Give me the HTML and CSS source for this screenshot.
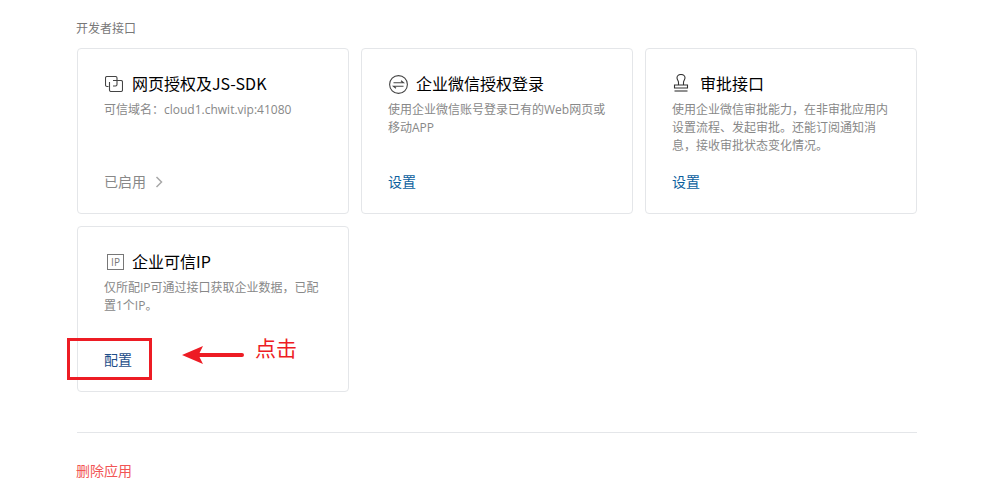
FILE: index.html
```html
<!DOCTYPE html>
<html lang="zh-CN">
<head>
    <meta charset="UTF-8">
    <meta name="viewport" content="width=device-width, initial-scale=1.0">
    <title>开发者接口</title>
    <link rel="stylesheet" href="styles.css">
</head>
<body>
    <div class="container">
        <h3 class="section-title">开发者接口</h3>

        <div class="card-grid">
            <div class="card">
                <div class="card-head">
                    <svg class="card-icon icon-link" width="18" height="16" viewBox="0 0 18 16" fill="none" stroke="#444" stroke-width="1.1">
                        <path d="M3.500 10.500H2A1.500 1.500 0 0 1 .5 9V2A1.500 1.500 0 0 1 2 .5H10.500A1.500 1.500 0 0 1 12 2V8.500A1.500 1.500 0 0 1 10.500 10H8"/>
                        <path d="M8 4.500H16A1.500 1.500 0 0 1 17.500 6V14A1.500 1.500 0 0 1 16 15.500H6A1.500 1.500 0 0 1 4.500 14V6"/>
                    </svg>
                    <span class="card-title">网页授权及JS-SDK</span>
                </div>
                <p class="card-desc">可信域名：cloud1.chwit.vip:41080</p>
                <a class="card-status">已启用
                    <svg class="chevron" width="8" height="12" viewBox="0 0 8 12" fill="none" stroke="#a8a8a8" stroke-width="1.5"><path d="M1.500 1L6.500 6L1.500 11"/></svg>
                </a>
            </div>

            <div class="card">
                <div class="card-head">
                    <svg class="card-icon icon-wechat" width="19" height="19" viewBox="0 0 19 19" fill="none" stroke="#444" stroke-width="1.1">
                        <circle cx="9.500" cy="9.500" r="8.900"/>
                        <path d="M4.500 7.800H14.500L12 5.800"/>
                        <path d="M14.500 11.200H4.500L7 13.200"/>
                    </svg>
                    <span class="card-title">企业微信授权登录</span>
                </div>
                <p class="card-desc">使用企业微信账号登录已有的Web网页或移动APP</p>
                <a class="card-link">设置</a>
            </div>

            <div class="card">
                <div class="card-head">
                    <svg class="card-icon icon-stamp" width="18" height="18" viewBox="0 0 18 18" fill="none" stroke="#333" stroke-width="1.1">
                        <path d="M6.500 11V8.500C6.500 6.500 5 6 5 3.800A4 3.300 0 0 1 13 3.800C13 6 11.500 6.500 11.500 8.500V11"/>
                        <path d="M2.500 11H15.500V14H2.500Z"/>
                        <path d="M2.500 17H15.500"/>
                    </svg>
                    <span class="card-title">审批接口</span>
                </div>
                <p class="card-desc">使用企业微信审批能力，在非审批应用内设置流程、发起审批。还能订阅通知消息，接收审批状态变化情况。</p>
                <a class="card-link">设置</a>
            </div>

            <div class="card">
                <div class="card-head">
                    <span class="ip-icon">IP</span>
                    <span class="card-title">企业可信IP</span>
                </div>
                <p class="card-desc">仅所配IP可通过接口获取企业数据，已配置1个IP。</p>
                <a class="card-link config">配置</a>
            </div>
        </div>

        <hr class="divider">
        <a class="delete-link">删除应用</a>

        <!-- 标注 -->
        <div class="mark-box"></div>
        <svg class="mark-arrow" width="64" height="20" viewBox="0 0 64 20">
            <path d="M0 10L21 1L17.500 8H60A2 2 0 0 1 60 12H17.500L21 19Z" fill="#ed1c24"/>
        </svg>
        <span class="mark-text">点击</span>
    </div>
</body>
</html>
```

FILE: styles.css
```css
body {
    font-family: "Open Sans", "Noto Sans CJK SC", sans-serif;
    margin: 0;
    background-color: #fff;
    color: #333;
}
a {
    text-decoration: none;
}
.container {
    position: relative;
    width: 841px;
    height: 494px;
    overflow: hidden;
    padding-left: 76px;
}
.section-title {
    margin: 0;
    padding-top: 20px;
    font-size: 12px;
    font-weight: normal;
    line-height: 17px;
    color: #787878;
}

/* Cards */
.card-grid {
    display: grid;
    grid-template-columns: repeat(3, 272px);
    grid-auto-rows: 166px;
    gap: 12px;
    margin: 11px 0 0 1px;
}
.card {
    box-sizing: border-box;
    display: flex;
    flex-direction: column;
    padding: 25px 25px 21px 26px;
    background-color: #fff;
    border: 1px solid #e4e6e9;
    border-radius: 4px;
}
.card-head {
    display: flex;
    align-items: center;
    height: 20px;
}
.card-icon {
    flex: none;
}
.icon-link {
    margin: 0 9px 0 1px;
}
.icon-wechat {
    margin: 0 8px 0 1px;
}
.icon-stamp {
    margin: -2px 10px 0 0;
}
.ip-icon {
    box-sizing: border-box;
    flex: none;
    width: 17px;
    height: 16px;
    margin: 0 8px 0 3px;
    border: 1px solid #777;
    font-size: 10px;
    line-height: 14px;
    text-align: center;
    color: #777;
}
.card-title {
    padding-bottom: 2px;
    font-family: "Noto Sans CJK SC", sans-serif;
    font-size: 16px;
    line-height: 20px;
    color: #000;
}
.card-desc {
    margin: 7px 0 0;
    font-size: 12px;
    line-height: 18px;
    color: #888;
}
.card-link,
.card-status {
    margin-top: auto;
    font-size: 14px;
    line-height: 20px;
}
.card-link {
    color: #0b5f9e;
}
.card-link.config {
    color: #1d4e89;
}
.card-status {
    display: flex;
    align-items: center;
    color: #888;
}
.chevron {
    margin-left: 9px;
}

.divider {
    height: 1px;
    margin: 40px 0 0 1px;
    border: none;
    background-color: #e4e6e9;
}
.delete-link {
    display: block;
    margin-top: 28px;
    font-size: 14px;
    line-height: 20px;
    color: #f25555;
}

/* Annotation on top of the screenshot */
.mark-box {
    position: absolute;
    left: 67px;
    top: 338px;
    width: 79px;
    height: 36px;
    border: 3px solid #ed1c24;
}
.mark-arrow {
    position: absolute;
    left: 182px;
    top: 345px;
}
.mark-text {
    position: absolute;
    left: 255px;
    top: 333px;
    font-size: 21px;
    line-height: 30px;
    color: #ed1c24;
}
```
